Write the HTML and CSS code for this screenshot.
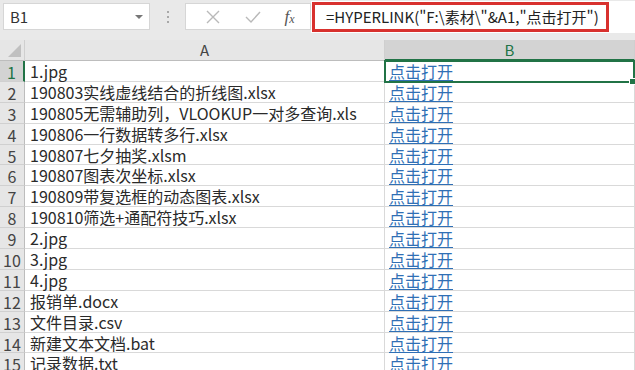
FILE: index.html
```html
<!DOCTYPE html>
<html lang="zh-CN">
<head>
  <meta charset="UTF-8" />
  <title>HYPERLINK</title>
  <link rel="stylesheet" href="styles.css">
</head>
<body>

  <!-- 编辑栏 -->
  <div class="toolbar">
    <div class="name-box">
      <span>B1</span>
      <span class="caret"></span>
    </div>
    <div class="grip"><i></i><i></i><i></i></div>
    <div class="fx-box">
      <svg width="16" height="16" viewBox="0 0 16 16"><path d="M2 2 L14 14 M14 2 L2 14" stroke="#b9b9b9" stroke-width="1.4" fill="none"/></svg>
      <svg width="18" height="16" viewBox="0 0 18 16"><path d="M2 8 L7 13 L16 3" stroke="#b9b9b9" stroke-width="1.4" fill="none"/></svg>
      <span class="fx">f<sub>x</sub></span>
    </div>
    <div class="formula">
      <span class="formula-text">=HYPERLINK("F:\素材\"&amp;A1,"点击打开")</span>
    </div>
  </div>

  <!-- 表格 -->
  <div class="sheet">
    <div class="corner"><span class="tri"></span></div>
    <div class="col-head">A</div>
    <div class="col-head sel">B</div>

    <div class="row-head sel">1</div><div class="cell">1.jpg</div><div class="cell link active"><a>点击打开</a><span class="handle"></span></div>
    <div class="row-head">2</div><div class="cell">190803实线虚线结合的折线图.xlsx</div><div class="cell link"><a>点击打开</a></div>
    <div class="row-head">3</div><div class="cell">190805无需辅助列，VLOOKUP一对多查询.xls</div><div class="cell link"><a>点击打开</a></div>
    <div class="row-head">4</div><div class="cell">190806一行数据转多行.xlsx</div><div class="cell link"><a>点击打开</a></div>
    <div class="row-head">5</div><div class="cell">190807七夕抽奖.xlsm</div><div class="cell link"><a>点击打开</a></div>
    <div class="row-head">6</div><div class="cell">190807图表次坐标.xlsx</div><div class="cell link"><a>点击打开</a></div>
    <div class="row-head">7</div><div class="cell">190809带复选框的动态图表.xlsx</div><div class="cell link"><a>点击打开</a></div>
    <div class="row-head">8</div><div class="cell">190810筛选+通配符技巧.xlsx</div><div class="cell link"><a>点击打开</a></div>
    <div class="row-head">9</div><div class="cell">2.jpg</div><div class="cell link"><a>点击打开</a></div>
    <div class="row-head">10</div><div class="cell">3.jpg</div><div class="cell link"><a>点击打开</a></div>
    <div class="row-head">11</div><div class="cell">4.jpg</div><div class="cell link"><a>点击打开</a></div>
    <div class="row-head">12</div><div class="cell">报销单.docx</div><div class="cell link"><a>点击打开</a></div>
    <div class="row-head">13</div><div class="cell">文件目录.csv</div><div class="cell link"><a>点击打开</a></div>
    <div class="row-head">14</div><div class="cell">新建文本文档.bat</div><div class="cell link"><a>点击打开</a></div>
    <div class="row-head">15</div><div class="cell">记录数据.txt</div><div class="cell link"><a>点击打开</a></div>
  </div>

</body>
</html>
```

FILE: styles.css
```css
body {
  margin: 0;
  width: 635px;
  height: 370px;
  overflow: hidden;
  background-color: #e9e9e9;
  font-family: "Noto Sans CJK SC", "Noto Sans", sans-serif;
  color: #2a2a2a;
}

/* 编辑栏 */
.toolbar {
  display: flex;
  align-items: flex-start;
  height: 40px;
  padding-top: 3px;
  box-sizing: border-box;
}
.name-box {
  width: 147px;
  height: 27px;
  margin-left: 3px;
  background: white;
  border: 1px solid #d6d6d6;
  box-sizing: border-box;
  display: flex;
  align-items: center;
  justify-content: space-between;
  padding: 0 6px 0 6px;
  font-size: 15px;
  color: #333;
}
.caret {
  width: 0;
  height: 0;
  border-left: 4px solid transparent;
  border-right: 4px solid transparent;
  border-top: 4px solid #777;
}
.grip {
  width: 35px;
  height: 27px;
  display: flex;
  flex-direction: column;
  align-items: center;
  justify-content: center;
  gap: 3px;
}
.grip i {
  width: 2px;
  height: 2px;
  background: #a8a8a8;
}
.fx-box {
  width: 126px;
  height: 27px;
  background: white;
  border: 1px solid #d6d6d6;
  box-sizing: border-box;
  display: flex;
  align-items: center;
  justify-content: space-around;
  padding: 0 4px 0 8px;
}
.fx {
  font-family: "Liberation Serif", serif;
  font-style: italic;
  font-size: 17px;
  color: #555;
  line-height: 1;
}
.fx sub {
  font-size: 12px;
  vertical-align: -1px;
}
.formula {
  flex: 1;
  height: 32px;
  margin-top: -2px;
  background: white;
  padding-left: 1px;
}
.formula-text {
  display: inline-block;
  width: 297px;
  height: 30px;
  margin-top: 1px;
  border: 3px solid #d8312e;
  box-sizing: border-box;
  padding-left: 11px;
  font-size: 15px;
  line-height: 23px;
  color: #222;
  white-space: nowrap;
}

/* 表格 */
.sheet {
  display: grid;
  grid-template-columns: 25px 360px 250px;
  grid-template-rows: 21px;
  grid-auto-rows: 20.9px;
  background: white;
}
.corner {
  background: #e6e6e6;
  border-right: 1px solid #cfcfcf;
  border-bottom: 1px solid #bdbdbd;
  position: relative;
}
.tri {
  position: absolute;
  right: 3px;
  bottom: 3px;
  width: 0;
  height: 0;
  border-left: 13px solid transparent;
  border-bottom: 13px solid #c0c0c0;
}
.col-head {
  background: #e6e6e6;
  border-right: 1px solid #cfcfcf;
  border-bottom: 1px solid #bdbdbd;
  text-align: center;
  font-size: 15px;
  line-height: 20px;
  color: #444;
}
.col-head.sel {
  background: #d3d3d3;
  border-bottom: 2px solid #217346;
  line-height: 19px;
  color: #217346;
}
.row-head {
  background: #e6e6e6;
  border-right: 1px solid #bdbdbd;
  border-bottom: 1px solid #d0d0d0;
  box-sizing: border-box;
  text-align: center;
  font-size: 16px;
  line-height: 20px;
  padding-top: 1px;
  color: #444;
}
.row-head.sel {
  background: #d3d3d3;
  border-right: 2px solid #217346;
  color: #217346;
}
.cell {
  border-right: 1px solid #d9d9d9;
  border-bottom: 1px solid #d9d9d9;
  box-sizing: border-box;
  padding-left: 5px;
  font-size: 16px;
  line-height: 19px;
  padding-top: 1px;
  white-space: nowrap;
}
.cell.link {
  padding-left: 4px;
}
.cell.link a {
  color: #2f6fb5;
  text-decoration: underline;
  text-underline-offset: 2px;
}
.cell.active {
  border: 2px solid #217346;
  margin: -1px 0 -1px -1px;
  padding: 0 0 0 3px;
  line-height: 18px;
  position: relative;
}
.handle {
  position: absolute;
  right: -3px;
  bottom: -4px;
  width: 5px;
  height: 5px;
  background: #217346;
  border: 1px solid white;
}
```
